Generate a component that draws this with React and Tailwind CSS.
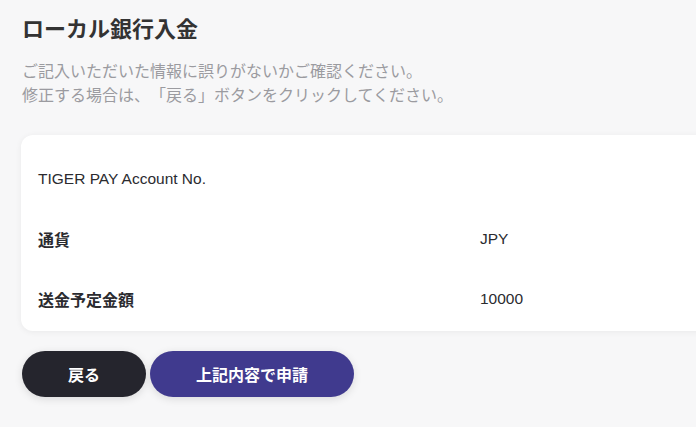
import React from "react";

const jp = { fontFamily: '"Noto Sans CJK JP", "Liberation Sans", sans-serif' };
const latin = { fontFamily: '"Liberation Sans", "Noto Sans CJK JP", sans-serif' };

const rows = [
    { label: "TIGER PAY Account No.", value: "", latin: true },
    { label: "通貨", value: "JPY" },
    { label: "送金予定金額", value: "10000" },
];

function App() {
    return (
        <div
            className="w-[696px] h-[427px] overflow-hidden bg-[#f7f7f8] pl-[22px] pt-[12px] [text-spacing-trim:space-all]"
            style={jp}
        >
            <h1 className="text-[22px] leading-[30px] font-bold text-[#333333]">ローカル銀行入金</h1>

            <div className="mt-[16px] text-[16px] leading-[24px] text-[#9b9ba0]">
                <p>ご記入いただいた情報に誤りがないかご確認ください。</p>
                <p>修正する場合は、「戻る」ボタンをクリックしてください。</p>
            </div>

            {/* Confirm card */}
            <div className="mt-[29px] -ml-[1px] w-[720px] h-[196px] bg-white rounded-xl shadow-[0_1px_6px_rgba(0,0,0,0.06)] pl-[17px] pt-[34px]">
                <div className="flex flex-col gap-[40px]">
                    {rows.map((row) => (
                        <div key={row.label} className="flex items-center h-[20px] text-[#2b2b2f]">
                            {row.latin ? (
                                <div className="w-[442px] text-[15.5px]" style={latin}>
                                    {row.label}
                                </div>
                            ) : (
                                <div className="w-[442px] text-[16px] font-bold">{row.label}</div>
                            )}
                            <div className="text-[15.5px]" style={latin}>
                                {row.value}
                            </div>
                        </div>
                    ))}
                </div>
            </div>

            {/* Buttons */}
            <div className="flex gap-[4px] mt-[20px]">
                <button
                    type="button"
                    className="w-[124px] h-[46px] rounded-full bg-[#25252d] text-white text-[16px] font-bold shadow-[0_2px_8px_rgba(0,0,0,0.12)]"
                >
                    戻る
                </button>
                <button
                    type="button"
                    className="w-[204px] h-[46px] rounded-full bg-[#403a8e] text-white text-[16px] font-bold shadow-[0_2px_8px_rgba(0,0,0,0.12)]"
                >
                    上記内容で申請
                </button>
            </div>
        </div>
    );
}

export default App;
